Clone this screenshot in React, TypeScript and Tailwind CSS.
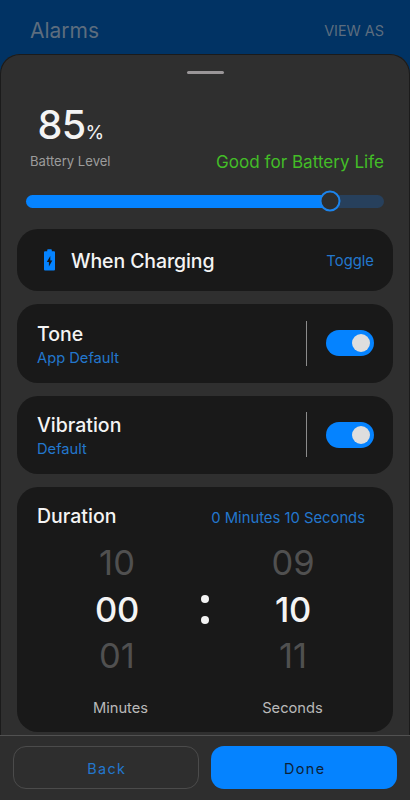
import React, { useState } from 'react'

const WHEELS = [
  { label: 'Minutes', prev: '10', current: '00', next: '01' },
  { label: 'Seconds', prev: '09', current: '10', next: '11' },
]

function BatteryIcon() {
  return (
    <svg width="12" height="22" viewBox="0 0 12 22" className="shrink-0">
      <path
        d="M4 0.2h3a0.8 0.8 0 0 1 0.8 0.8v1.2h2.2a1 1 0 0 1 1 1v17.3a1 1 0 0 1-1 1H1a1 1 0 0 1-1-1v-17.3a1 1 0 0 1 1-1h2.2V1A0.8 0.8 0 0 1 4 0.2z"
        fill="#0583ff"
      />
      <path d="M6.3 7v4.4h2L4.9 17.4v-4.3H2.8z" fill="#181818" />
    </svg>
  )
}

function Switch({ label }: { label: string }) {
  const [on, setOn] = useState(true)

  return (
    <button
      role="switch"
      aria-checked={on}
      aria-label={label}
      onClick={() => setOn(!on)}
      className={`flex items-center w-12 h-[26px] rounded-full px-1 ${
        on ? 'justify-end bg-[#0583ff]' : 'justify-start bg-[#3a3a3a]'
      }`}
    >
      <span className="size-[18px] rounded-full bg-[#dedede]" />
    </button>
  )
}

function SettingCard({ title, value }: { title: string; value: string }) {
  return (
    <section className="flex items-center h-[78.5px] shrink-0 rounded-[21px] bg-[#191919] pl-5 pr-[19px]">
      <div className="flex-1 pt-[5px]">
        <h2 className="text-[19.5px] leading-6 font-medium text-[#f4f4f4]">{title}</h2>
        <p className="text-[14.7px] leading-6 text-[#2377cd]">{value}</p>
      </div>
      <div className="w-px h-[45px] bg-[#8b8b8b] mr-[19px]" />
      <Switch label={title} />
    </section>
  )
}

function BatteryLevel({ level }: { level: number }) {
  return (
    <section className="flex flex-col">
      <div className="flex items-baseline pl-[37.5px] h-[46px] leading-[48px] text-[#f4f4f4]">
        <span className="text-[39.5px] font-medium tracking-[-0.6px]">{level}</span>
        <span className="text-[19px]">%</span>
      </div>
      <div className="flex items-center justify-between h-[26px] mt-0.5 pl-[30px] pr-[26px]">
        <span className="text-[13.1px] text-[#9c9c9c]">Battery Level</span>
        <span className="text-[17.1px] text-[#43bd27]">Good for Battery Life</span>
      </div>
      {/* Charge limit slider */}
      <div className="flex items-center h-[22px] mt-[15px] ml-[26px] mr-[26px]">
        <div className="relative w-full h-[13px] rounded-full bg-[#27405c]">
          <div className="h-full rounded-full bg-[#0583ff]" style={{ width: `${level}%` }} />
          <div
            className="absolute top-1/2 size-[21px] -translate-x-1/2 -translate-y-1/2 rounded-full border-2 border-[#1c84ec] bg-[#2d2d2d]"
            style={{ left: `${level}%` }}
          />
        </div>
      </div>
    </section>
  )
}

function Wheel({ wheel }: { wheel: (typeof WHEELS)[number] }) {
  return (
    <div className="flex flex-col items-center w-[118px] text-[34.5px] leading-[46.5px]">
      <span className="text-[#505050]">{wheel.prev}</span>
      <span className="font-medium tracking-[-0.3px] text-[#f4f4f4]">{wheel.current}</span>
      <span className="text-[#505050]">{wheel.next}</span>
    </div>
  )
}

export default function App() {
  return (
    <div className="flex flex-col w-full h-[800px] overflow-hidden bg-[#013364] font-['Inter',sans-serif]">
      <header className="flex items-center justify-between h-[54px] shrink-0 pt-[7px] pl-[30px] pr-[26px] text-[#5d6d7e]">
        <h1 className="text-[21px]">Alarms</h1>
        <button className="text-[14.4px]">VIEW AS</button>
      </header>

      <main className="flex flex-col flex-1 min-h-0 rounded-t-[20px] bg-[#2f2f2f] shadow-[inset_0_0_0_1px_#1b1b1b]">
        <div className="w-[37px] h-[3px] mt-[17px] mb-[27px] mx-auto shrink-0 rounded-full bg-[#9a9698]" />

        <BatteryLevel level={85} />

        <div className="flex flex-col gap-[13px] mt-[17px] px-[17px]">
          <section className="flex items-center h-[62px] shrink-0 rounded-[21px] bg-[#191919] pl-[27px] pr-[19px]">
            <BatteryIcon />
            <h2 className="flex-1 ml-[15px] pt-[3px] text-[19.5px] font-medium tracking-[-0.1px] text-[#f4f4f4]">
              When Charging
            </h2>
            <button className="pt-0.5 text-[14.8px] text-[#2377cd]">Toggle</button>
          </section>

          <SettingCard title="Tone" value="App Default" />
          <SettingCard title="Vibration" value="Default" />

          <section className="flex flex-col h-[245px] shrink-0 rounded-[21px] bg-[#191919] pt-[18px]">
            <div className="flex items-center justify-between h-6 pl-5 pr-[28px]">
              <h2 className="text-[19.5px] font-medium text-[#f4f4f4]">Duration</h2>
              <span className="pt-[3px] text-[14.8px] text-[#2377cd]">0 Minutes 10 Seconds</span>
            </div>

            <div className="flex items-center justify-center mt-[11px]">
              <Wheel wheel={WHEELS[0]} />
              <div className="flex flex-col items-center gap-[13px] w-[58px]">
                <span className="size-2 rounded-full bg-[#f4f4f4]" />
                <span className="size-2 rounded-full bg-[#f4f4f4]" />
              </div>
              <Wheel wheel={WHEELS[1]} />
            </div>

            <div className="flex justify-center gap-[54px] mt-4 pl-[3px] text-[14.7px] leading-6 text-[#b9b9b9]">
              {WHEELS.map((wheel) => (
                <span key={wheel.label} className="w-[118px] text-center">
                  {wheel.label}
                </span>
              ))}
            </div>
          </section>
        </div>

        <footer className="flex flex-1 items-start gap-3 shrink-0 mt-[3px] px-[13px] pt-[10px] border-t border-[#515151] bg-[#2e2e2e]">
          <button className="w-[186px] h-[43px] rounded-[13px] border border-[#4b4b4b] pt-0.5 pl-[1.5px] text-[14.4px] tracking-[1.4px] text-[#2377cd]">
            Back
          </button>
          <button className="w-[186px] h-[43px] rounded-[13px] bg-[#0583ff] pt-0.5 pl-[1.5px] text-[14.4px] tracking-[1.4px] text-[#0d2238]">
            Done
          </button>
        </footer>
      </main>
    </div>
  )
}
